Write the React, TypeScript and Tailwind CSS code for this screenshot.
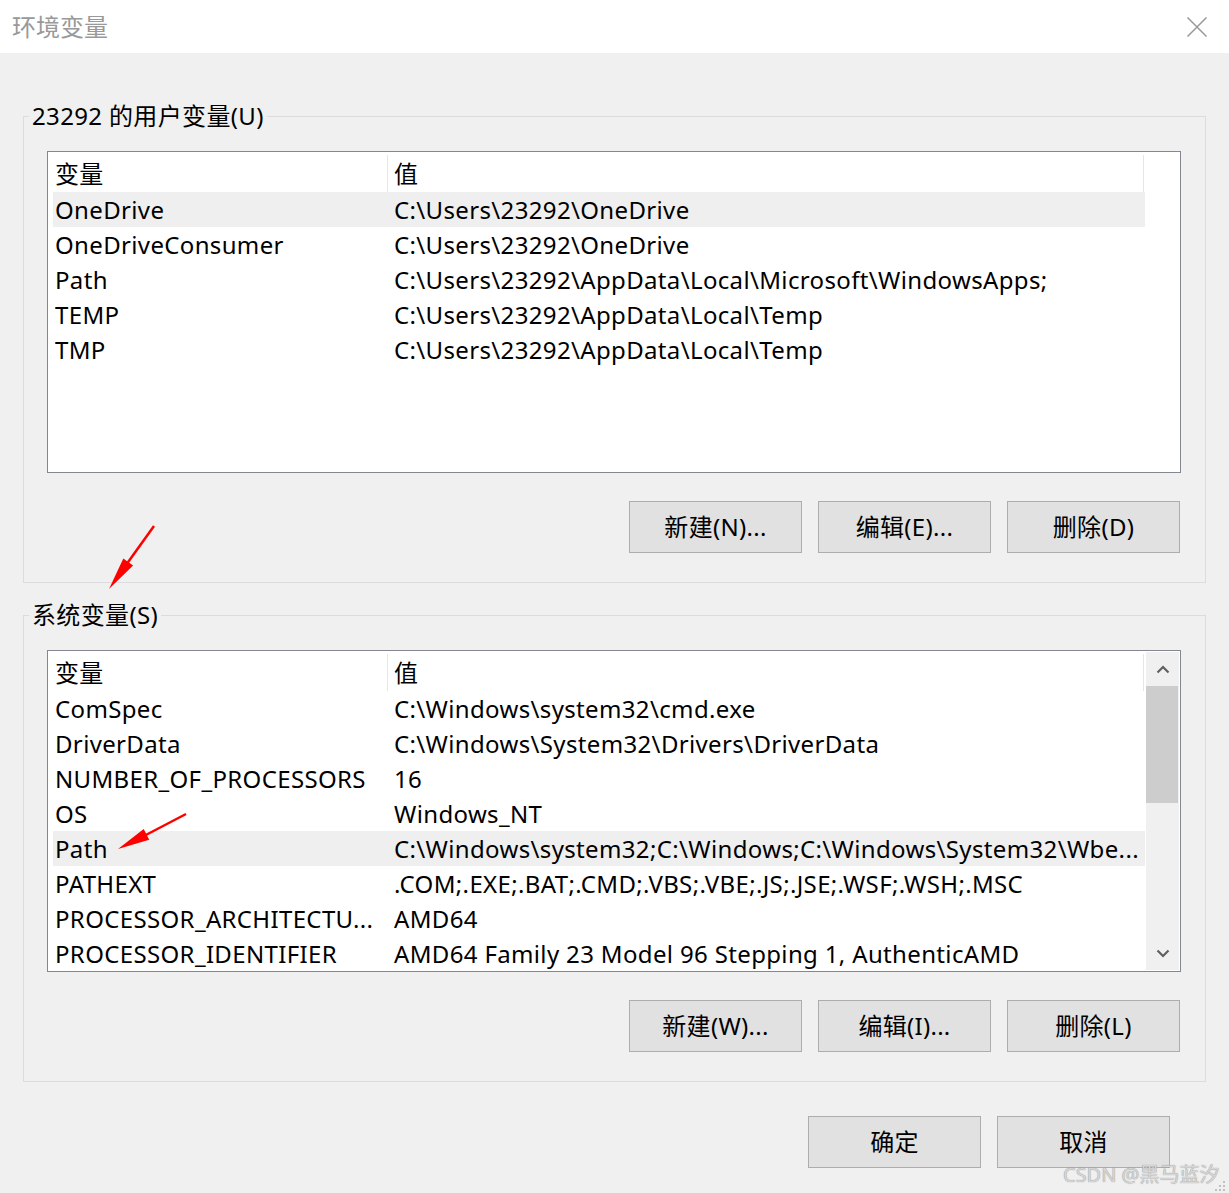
import React from "react";

type Row = { name: string; value: string; selected?: boolean };

const userVars: Row[] = [
  { name: "OneDrive", value: "C:\\Users\\23292\\OneDrive", selected: true },
  { name: "OneDriveConsumer", value: "C:\\Users\\23292\\OneDrive" },
  { name: "Path", value: "C:\\Users\\23292\\AppData\\Local\\Microsoft\\WindowsApps;" },
  { name: "TEMP", value: "C:\\Users\\23292\\AppData\\Local\\Temp" },
  { name: "TMP", value: "C:\\Users\\23292\\AppData\\Local\\Temp" },
];

const systemVars: Row[] = [
  { name: "ComSpec", value: "C:\\Windows\\system32\\cmd.exe" },
  { name: "DriverData", value: "C:\\Windows\\System32\\Drivers\\DriverData" },
  { name: "NUMBER_OF_PROCESSORS", value: "16" },
  { name: "OS", value: "Windows_NT" },
  { name: "Path", value: "C:\\Windows\\system32;C:\\Windows;C:\\Windows\\System32\\Wbe...", selected: true },
  { name: "PATHEXT", value: ".COM;.EXE;.BAT;.CMD;.VBS;.VBE;.JS;.JSE;.WSF;.WSH;.MSC" },
  { name: "PROCESSOR_ARCHITECTU...", value: "AMD64" },
  { name: "PROCESSOR_IDENTIFIER", value: "AMD64 Family 23 Model 96 Stepping 1, AuthenticAMD" },
];

function WinButton({ label }: { label: string }) {
  return (
    <button className="w-[173px] h-[52px] bg-[#e1e1e1] border border-[#adadad] text-[24px] tracking-[0.3px] text-black leading-none flex items-center justify-center">
      {label}
    </button>
  );
}

function Chevron({ up }: { up?: boolean }) {
  return (
    <svg width="14" height="9" viewBox="0 0 14 9">
      <path
        d={up ? "M1.5 7.5 L7 2 L12.5 7.5" : "M1.5 1.5 L7 7 L12.5 1.5"}
        fill="none"
        stroke="#606060"
        strokeWidth="2.2"
      />
    </svg>
  );
}

function VarList({ rows, scroll }: { rows: Row[]; scroll?: boolean }) {
  return (
    <div className="w-[1134px] h-[322px] border border-[#828790] bg-white flex pt-[1px] pl-[5px] pr-[1px] pb-[1px] overflow-hidden">
      <div className="w-[1092px] flex flex-col">
        {/* header */}
        <div className="h-[39px] flex items-center shrink-0 pt-[2px]">
          <div className="w-[335px] h-full pl-[2px] flex items-center border-r border-[#e5e5e5]">变量</div>
          <div className="w-[756px] h-full pl-[6px] flex items-center border-r border-[#e5e5e5]">值</div>
        </div>
        {rows.map((r) => (
          <div
            key={r.name}
            className={`h-[35px] shrink-0 flex items-center whitespace-nowrap pt-[1px] ${r.selected ? "bg-[#efefef]" : ""}`}
          >
            <div className="w-[335px] pl-[2px]">{r.name}</div>
            <div className="pl-[6px]">{r.value}</div>
          </div>
        ))}
      </div>
      {scroll && (
        <div className="ml-[1px] w-[33px] bg-[#f0f0f0] flex flex-col">
          <div className="h-[34px] flex items-center justify-center">
            <Chevron up />
          </div>
          <div className="h-[117px] bg-[#cdcdcd] mr-[1px]" />
          <div className="flex-1" />
          <div className="h-[34px] flex items-center justify-center">
            <Chevron />
          </div>
        </div>
      )}
    </div>
  );
}

function GroupBox({
  title,
  rows,
  scroll,
  buttons,
}: {
  title: string;
  rows: Row[];
  scroll?: boolean;
  buttons: string[];
}) {
  return (
    <fieldset className="w-[1183px] border border-[#dcdcdc] p-0 m-0">
      <legend className="ml-[5px] px-[3px] text-[24px] leading-[30px] text-black">{title}</legend>
      <div className="pl-[23px] pt-[20px] pb-[29px]">
        <VarList rows={rows} scroll={scroll} />
        <div className="w-[1134px] mt-[28px] flex justify-end gap-[16px] pr-[1px]">
          {buttons.map((b) => (
            <WinButton key={b} label={b} />
          ))}
        </div>
      </div>
    </fieldset>
  );
}

export default function App() {
  return (
    <div
      className="w-[1229px] h-[1193px] bg-[#f0f0f0] relative overflow-hidden text-[24px] tracking-[0.35px] text-black"
      style={{ fontFamily: '"Noto Sans", "Noto Sans CJK SC", sans-serif' }}
    >
      {/* title bar */}
      <div className="h-[53px] bg-white flex items-center justify-between pl-[12px] pr-[22px]">
        <span className="text-[24px] tracking-normal text-[#999999] leading-none">环境变量</span>
        <svg width="20" height="20" viewBox="0 0 20 20">
          <path d="M0.5 0.5 L19.5 19.5 M19.5 0.5 L0.5 19.5" stroke="#999999" strokeWidth="1.5" />
        </svg>
      </div>

      <div className="pl-[23px] pt-[48px] flex flex-col">
        <GroupBox
          title="23292 的用户变量(U)"
          rows={userVars}
          buttons={["新建(N)...", "编辑(E)...", "删除(D)"]}
        />
        <div className="mt-[17px]">
          <GroupBox
            title="系统变量(S)"
            rows={systemVars}
            scroll
            buttons={["新建(W)...", "编辑(I)...", "删除(L)"]}
          />
        </div>
        <div className="w-[1147px] mt-[34px] flex justify-end gap-[16px]">
          <WinButton label="确定" />
          <WinButton label="取消" />
        </div>
      </div>

      {/* annotation arrows */}
      <svg className="absolute inset-0 pointer-events-none" width="1229" height="1193" viewBox="0 0 1229 1193">
        <line x1="154" y1="526" x2="126" y2="565" stroke="#ff0000" strokeWidth="2.5" />
        <polygon points="109,589 123.3,558.6 133.1,565.6" fill="#ff0000" />
        <line x1="186" y1="814" x2="142" y2="837" stroke="#ff0000" strokeWidth="2.5" />
        <polygon points="118,849 143.7,829.1 149.2,839.7" fill="#ff0000" />
      </svg>

      {/* watermark */}
      <div className="absolute left-[1063px] top-[1161px] text-[20px] tracking-normal leading-[28px] text-[#d6d6d6] whitespace-nowrap [text-shadow:0_0_1px_#7a7a7a]">
        CSDN @黑马蓝汐
      </div>
      <svg className="absolute right-[2px] bottom-[0px]" width="14" height="14" viewBox="0 0 14 14">
        <rect x="10" y="2" width="2" height="2" fill="#c0c0c0" />
        <rect x="6" y="6" width="2" height="2" fill="#c0c0c0" />
        <rect x="10" y="6" width="2" height="2" fill="#c0c0c0" />
        <rect x="2" y="10" width="2" height="2" fill="#c0c0c0" />
        <rect x="6" y="10" width="2" height="2" fill="#c0c0c0" />
        <rect x="10" y="10" width="2" height="2" fill="#c0c0c0" />
      </svg>
    </div>
  );
}
